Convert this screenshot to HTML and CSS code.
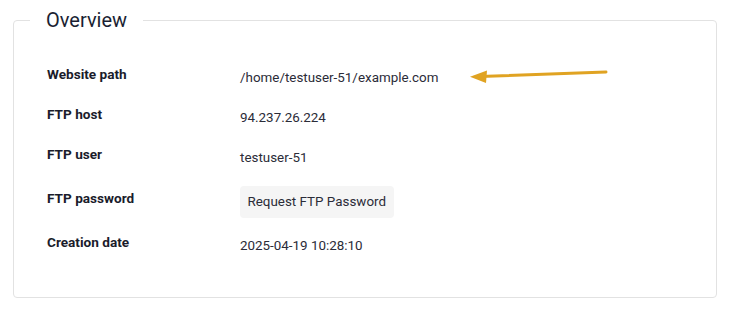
FILE: index.html
```
<!DOCTYPE html>
<html lang="en">
<head>
<meta charset="utf-8">
<title>Overview</title>
<link rel="stylesheet" href="styles.css">
</head>
<body>
<div class="page">
  <fieldset class="panel">
    <legend class="panel-title">Overview</legend>
    <div class="rows">
      <div class="row">
        <div class="label">Website path</div>
        <div class="value">/home/testuser-51/example.com</div>
      </div>
      <div class="row">
        <div class="label">FTP host</div>
        <div class="value">94.237.26.224</div>
      </div>
      <div class="row">
        <div class="label">FTP user</div>
        <div class="value">testuser-51</div>
      </div>
      <div class="row row-button">
        <div class="label">FTP password</div>
        <div class="value"><button class="btn" type="button">Request FTP Password</button></div>
      </div>
      <div class="row">
        <div class="label">Creation date</div>
        <div class="value">2025-04-19 10:28:10</div>
      </div>
    </div>
  </fieldset>
  <svg class="arrow" width="150" height="20" viewBox="0 0 150 20" aria-hidden="true">
    <line x1="146" y1="4" x2="20" y2="8.5" stroke="#E0A322" stroke-width="3" stroke-linecap="round"/>
    <polygon points="10,8.7 27,2.5 26,15" fill="#E0A322"/>
  </svg>
</div>
</body>
</html>
```
FILE: styles.css
```
html, body {
  margin: 0;
  padding: 0;
  background: #ffffff;
}
body {
  font-family: Roboto, "Liberation Sans", Arial, sans-serif;
  color: #1f2030;
}
.page {
  position: relative;
  width: 704px;
  padding: 6px 0 0 13px;
}
.panel {
  margin: 0;
  padding: 32px 33px 39px 33px;
  border: 1px solid #e2e2e2;
  border-radius: 4px;
  min-width: 0;
}
.panel-title {
  margin-left: -17px;
  padding: 0 16px;
  font-size: 20px;
  line-height: 28px;
  font-weight: 400;
  color: #1a1f33;
}
.rows {
  display: flex;
  flex-direction: column;
  gap: 16px;
}
.row {
  display: grid;
  grid-template-columns: 193px 1fr;
  align-items: center;
  min-height: 24px;
}
.row-button {
  min-height: 32px;
}
.label {
  font-size: 13.6px;
  font-weight: 700;
  line-height: 17px;
  padding-bottom: 7px;
  color: #1a1c2b;
}
.value {
  font-size: 13.4px;
  line-height: 24px;
  color: #2b2c38;
}
.btn {
  font-family: inherit;
  font-size: 13.4px;
  line-height: 20px;
  color: #2b2c38;
  background: #f5f5f5;
  border: 0;
  border-radius: 4px;
  padding: 6px 7.5px;
  height: 32px;
  cursor: pointer;
}
.arrow {
  position: absolute;
  left: 460px;
  top: 68px;
}
```
